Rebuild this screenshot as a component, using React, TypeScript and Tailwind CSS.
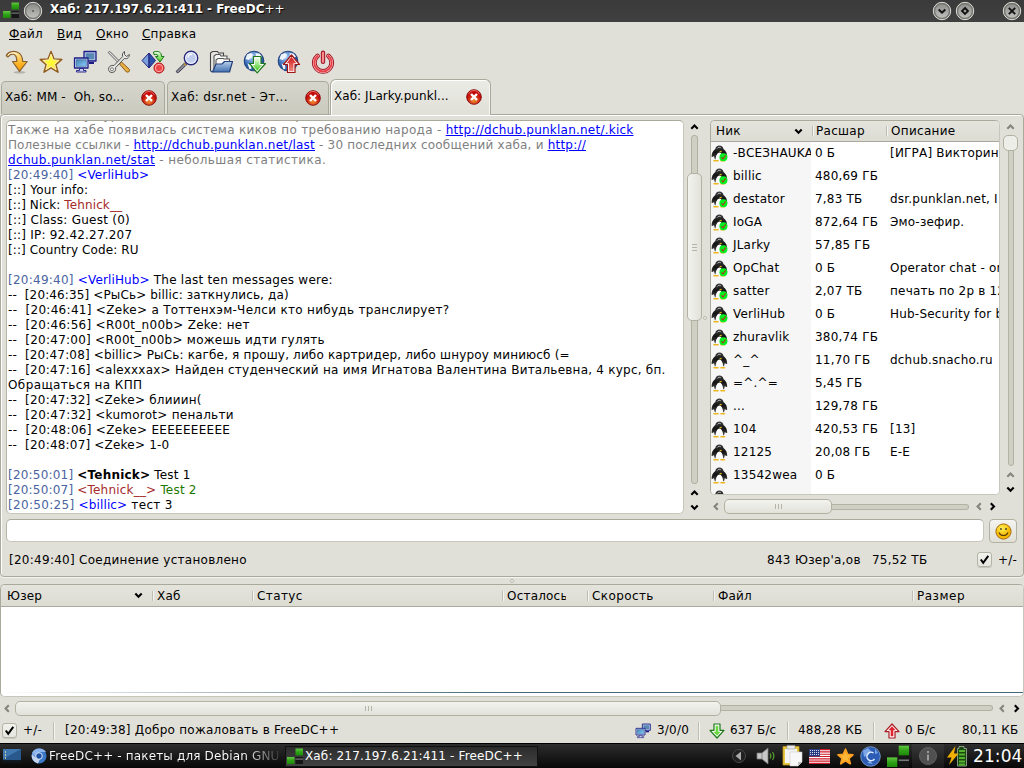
import React from "react";

/* ---------- toolbar and tray icons ---------- */

const Svg = ({ s = 24, children, className = "" }: { s?: number; children: React.ReactNode; className?: string }) => (
  <svg width={s} height={s} viewBox="0 0 24 24" className={"block shrink-0 " + className}>
    {children}
  </svg>
);

const Defs = () => (
  <svg width="0" height="0" className="absolute">
    <defs>
      <linearGradient id="gold" x1="0" y1="0" x2="0" y2="1"><stop offset="0" stopColor="#ffe9a0" /><stop offset=".6" stopColor="#fdb528" /><stop offset="1" stopColor="#f59a00" /></linearGradient>
      <radialGradient id="star"><stop offset="0" stopColor="#ffff30" /><stop offset=".5" stopColor="#fff040" /><stop offset="1" stopColor="#f8c060" /></radialGradient>
      <linearGradient id="screen" x1="0" y1="0" x2="1" y2="1"><stop offset="0" stopColor="#3f7fb0" /><stop offset="1" stopColor="#8fd0ff" /></linearGradient>
      <linearGradient id="green" x1="0" y1="0" x2="0" y2="1"><stop offset="0" stopColor="#f0ffe8" /><stop offset="1" stopColor="#3fc818" /></linearGradient>
      <linearGradient id="red" x1="0" y1="0" x2="0" y2="1"><stop offset="0" stopColor="#d01818" /><stop offset="1" stopColor="#f08880" /></linearGradient>
      <radialGradient id="globe" cx=".4" cy=".3"><stop offset="0" stopColor="#a8d0f8" /><stop offset="1" stopColor="#2a5cac" /></radialGradient>
      <linearGradient id="folder" x1="0" y1="0" x2="0" y2="1"><stop offset="0" stopColor="#b8d0ea" /><stop offset="1" stopColor="#4070b0" /></linearGradient>
      <radialGradient id="close" cx=".5" cy=".75"><stop offset="0" stopColor="#f08a30" /><stop offset="1" stopColor="#c40a0a" /></radialGradient>
      <radialGradient id="smile" cx=".4" cy=".3"><stop offset="0" stopColor="#fff25a" /><stop offset="1" stopColor="#f4b800" /></radialGradient>
      <linearGradient id="led" x1="0" y1="0" x2="0" y2="1"><stop offset="0" stopColor="#60c840" /><stop offset=".5" stopColor="#30a018" /><stop offset="1" stopColor="#1c8a08" /></linearGradient>
      <linearGradient id="btn" x1="0" y1="0" x2="0" y2="1"><stop offset="0" stopColor="#8c8c8a" /><stop offset="1" stopColor="#c0c0bc" /></linearGradient>
      <linearGradient id="tux" x1="0" y1="0" x2="0" y2="1"><stop offset="0" stopColor="#3c3c3c" /><stop offset=".5" stopColor="#141414" /><stop offset="1" stopColor="#4a4a4a" /></linearGradient>
    </defs>
  </svg>
);

const Reconnect = () => (
  <Svg>
    <ellipse cx="14.500" cy="22.300" rx="6" ry="1.200" fill="#0003" />
    <path d="M1.300 5.800C2.500 2 8 .3 12.500 2.300c3.500 1.600 5.200 4.500 5.200 9.200h4.500L14.500 21.300 7.500 11.500h4.200c.2-4-.7-6.500-3.200-7.300C6 3.700 4.200 5 3 7z" fill="url(#gold)" stroke="#8a6030" strokeWidth="1.200" strokeLinejoin="round" />
    <path d="M3 5C6 2.300 10 2.500 12.500 4.500" fill="none" stroke="#fff6dc" strokeWidth="1" />
  </Svg>
);
const Star = ({ s = 24 }: { s?: number }) => (
  <Svg s={s}>
    <path d="M12 1.500l3 7.500 7.800.4-6 5.300 2.200 7.500L12 17.800l-7 4.400 2.200-7.500-6-5.300L9 9z" fill="url(#star)" stroke="#8f5a1c" strokeWidth="1.500" strokeLinejoin="round" />
    <path d="M12 4l2.200 5.900 5.900.4-4.500 4 1.600 5.500L12 16.500l-5.200 3.300 1.600-5.500-4.500-4 5.900-.4z" fill="none" stroke="#fff4c8" strokeWidth=".8" />
  </Svg>
);
const Computers = ({ s = 24 }: { s?: number }) => (
  <Svg s={s}>
    <path d="M11 1.500h12v9.500H11z" fill="#b8c8e8" stroke="#1c1c84" strokeWidth="1.300" strokeLinejoin="round" />
    <path d="M12.700 3.200h8.600v6.100h-8.600z" fill="#5888b4" />
    <path d="M16 13h5" stroke="#1c1c84" strokeWidth="2" />
    <path d="M1.500 8h13.500v10H1.500z" fill="#dce8f8" stroke="#1c1c84" strokeWidth="1.300" strokeLinejoin="round" />
    <path d="M3.200 9.700h10.100v6.600H3.200z" fill="url(#screen)" stroke="#2c5c94" strokeWidth=".6" />
    <path d="M6.500 18.500h4V20.500h2.500V22h-9.500v-1.500H6.500z" fill="#c8d0ec" stroke="#1c1c84" strokeWidth=".9" />
  </Svg>
);
const Tools = () => (
  <Svg>
    <path d="M1.200 2.500l1.500-1.200 10 10-1.500 1.500z" fill="#ddd" stroke="#555" strokeWidth=".9" />
    <path d="M12.500 14l2-2 8 7.500c.5 2-1 3-3 2.500z" fill="#e8b040" stroke="#8a5c18" strokeWidth="1" />
    <path d="M17.500 1.500c-2 1-2.500 3-1.800 5L7 15.500c-3-.7-5.500 1-5.500 3.800 0 2 2 3.700 4.200 3.200 2.300-.4 3.400-2.500 2.800-4.800l8.800-9.200c2.500.8 5.200-.8 5.200-4l-3 2-2-2z" fill="#e6e6e2" stroke="#555" strokeWidth="1" strokeLinejoin="round" />
    <circle cx="5" cy="19.300" r="1.500" fill="#fff" stroke="#666" strokeWidth=".9" />
  </Svg>
);
const Shapes = () => (
  <Svg>
    <path d="M8 3v15L1 10.500z" fill="#7ca0dc" stroke="#20207c" strokeWidth="1" />
    <path d="M8 3l6.500 7.500L8 18z" fill="#2c50a8" stroke="#20207c" strokeWidth="1" />
    <path d="M12.500 2c5-1.500 8 0 8 4.500H23l-4 5.500L14.500 6.500h2.500c0-2-1.500-2.500-4-1.800z" fill="url(#green)" stroke="#1a7a18" strokeWidth="1" strokeLinejoin="round" />
    <circle cx="18" cy="18" r="5" fill="#f04848" stroke="#b01414" strokeWidth="1" />
    <circle cx="18" cy="18" r="3.700" fill="none" stroke="#ffc0c0" strokeWidth=".8" />
  </Svg>
);
const Search = () => (
  <Svg>
    <path d="M1.500 21L10 12.500l2 1.800-8.500 8.200c-1.500.7-2.500-.5-2-1.500z" fill="#8c8c98" stroke="#3a3a4c" strokeWidth="1" />
    <path d="M9 13.500l2 2" stroke="#c89030" strokeWidth="1.300" />
    <circle cx="16" cy="8" r="6.700" fill="#c0ccec" stroke="#282878" strokeWidth="1.400" />
    <circle cx="16" cy="8" r="5.300" fill="none" stroke="#e8ecfc" strokeWidth="1.200" />
    <path d="M13 7.500c0-2 1.500-3.500 4-3" stroke="#fff" strokeWidth="1.300" fill="none" />
  </Svg>
);
const Folders = () => (
  <Svg>
    <path d="M1.500 21V3L3.500 1.500h5l1 1.500h5v4" fill="#e4e4e0" stroke="#444" strokeWidth="1.100" />
    <path d="M5 20V6l2-1.500h4l1 1.500h6v4" fill="#f4f4f0" stroke="#555" strokeWidth="1.100" />
    <path d="M7 19V10l2-1.500h5l1 .5h5.500V12" fill="#fafaf8" stroke="#555" strokeWidth="1.100" />
    <path d="M3.500 22L7 14h6l2.500-2.500h8L20.500 22z" fill="url(#folder)" stroke="#24407c" strokeWidth="1.200" strokeLinejoin="round" />
    <path d="M1.500 21l2 1" stroke="#24407c" strokeWidth="1.200" />
  </Svg>
);
const Globe = () => (
  <>
    <circle cx="11" cy="11" r="9.800" fill="url(#globe)" stroke="#24447c" strokeWidth="1.100" />
    <path d="M4 4.500l4-1.500 2 1.500-1 3-3.500 2.500L2.500 9zM12.500 3l4 .5 2.500 3-3 2-3-1.500zM4.500 13.500L8 15l.5 3.500-2 1z" fill="#eef4fa" />
  </>
);
const GlobeDown = () => (
  <Svg>
    <Globe />
    <path d="M10.500 6.500h7.500v7h4.500L14.200 22.800 6.500 13.500h4z" fill="#fff" stroke="#1c7818" strokeWidth="1.200" strokeLinejoin="round" />
    <path d="M12 8h4.500v7h2.700L14.200 20.800 9.500 15H12z" fill="url(#green)" />
  </Svg>
);
const GlobeUp = () => (
  <Svg>
    <Globe />
    <path d="M10.500 22.500H18v-8h4.500L14.500 5 6.500 14.500h4z" fill="#fff" stroke="#a01414" strokeWidth="1.200" strokeLinejoin="round" />
    <path d="M12 21.200h4.500v-8h3L14.500 7l-5 6.200H12z" fill="url(#red)" />
  </Svg>
);
const Power = () => (
  <Svg>
    <path d="M6.500 6A8.700 8.700 0 1 0 17.500 6" fill="none" stroke="#a01828" strokeWidth="4.800" strokeLinecap="round" />
    <path d="M6.500 6A8.700 8.700 0 1 0 17.500 6" fill="none" stroke="#ffc0c0" strokeWidth="2.800" strokeLinecap="round" />
    <path d="M6.500 6A8.700 8.700 0 1 0 17.500 6" fill="none" stroke="#e84048" strokeWidth="1.800" strokeLinecap="round" />
    <path d="M12 2.800v9" stroke="#a01828" strokeWidth="4.400" strokeLinecap="round" />
    <path d="M12 2.800v9" stroke="#f88c8c" strokeWidth="2.200" strokeLinecap="round" />
  </Svg>
);
const TabClose = () => (
  <svg width="16" height="16" viewBox="0 0 16 16" className="block shrink-0">
    <circle cx="8" cy="8" r="7.300" fill="url(#close)" stroke="#8c1010" strokeWidth="1" />
    <path d="M2.500 5a6 6 0 0 1 11 0" fill="none" stroke="#e86a60" strokeWidth="1" />
    <path d="M5 5l6 6M11 5l-6 6" stroke="#fff" strokeWidth="2.400" />
  </svg>
);
const Leds = ({ className = "size-[16px]" }: { className?: string }) => (
  <svg viewBox="0 0 16 16" className={"block shrink-0 " + className}>
    <path d="M0 9h7.500V16H0z" fill="url(#led)" />
    <path d="M8.500 .5H16v7H8.500z" fill="url(#led)" />
    <path d="M8.500 9H16v7H8.500z" fill="#161616" />
    <path d="M8.500 10.500H16v1.200H8.500z" fill="#777" />
  </svg>
);
const Tux = ({ ok }: { ok: boolean }) => (
  <svg width="17" height="17" viewBox="0 0 17 17" className="block shrink-0">
    <path d="M2.800 7v7.500h11V7z" fill="#e8e8e8" />
    <path d="M8.400 .6c2.300 0 3.700 1.300 4.100 3.500 2.300 1.800 3.900 4.500 3.700 7.900-1 .1-1.700-.3-2.400-1-.3 2-.8 3.200-1.600 3.500C12 11 10.700 8 8.400 8s-3.600 3-3.800 6.500C3.800 14.200 3.300 13 3 11c-.7.700-1.400 1.100-2.400 1C.4 8.600 2 5.900 4.300 4.100 4.700 1.900 6.100.6 8.400.6z" fill="url(#tux)" />
    <path d="M8.400 7.500c2 0 3.200 3 3.400 7H5c.2-4 1.400-7 3.400-7z" fill="#fff" />
    <path d="M6.200 3.600c.8-1.400 2.600-1.700 3.600-.8" stroke="#b0b0b0" strokeWidth="1" fill="none" />
    <path d="M8.200 6.300l2-.6.8 1.200-1.500.6z" fill="#e0b020" />
    <path d="M3 15.700h4M10 15.700h3.500" stroke="#edb71c" strokeWidth="1.500" strokeLinecap="round" />
    {ok && (
      <>
        <circle cx="12.400" cy="12.200" r="4" fill="#00f020" />
        <path d="M10.400 12.300l1.600 1.700 2.600-3.600" stroke="#b83018" strokeWidth="1.100" fill="none" />
      </>
    )}
  </svg>
);
const Down = ({ s = 16 }: { s?: number }) => (
  <Svg s={s}>
    <path d="M7.500 1.500h9V11h6L12 22.500 1.500 11h6z" fill="#fff" stroke="#1c7818" strokeWidth="1.800" strokeLinejoin="round" />
    <path d="M10 4h4V13h3.500L12 19 6.500 13H10z" fill="#68d840" />
  </Svg>
);
const Up = ({ s = 16 }: { s?: number }) => (
  <Svg s={s}>
    <path d="M7.500 22.500h9V13h6L12 1.500 1.500 13h6z" fill="#fff" stroke="#a81c24" strokeWidth="1.800" strokeLinejoin="round" />
    <path d="M10 20h4V11h3.500L12 5 6.500 11H10z" fill="#e02430" />
  </Svg>
);

/* ---------- widgets ---------- */

type Dir = "up" | "down" | "left" | "right";
const PATHS: Record<Dir, string> = {
  up: "M1.300 5.800L4.500 2.600 7.700 5.800",
  down: "M1.300 2.600L4.500 5.800 7.700 2.600",
  left: "M5.800 1.300L2.600 4.500 5.800 7.700",
  right: "M2.800 1.300L6 4.500 2.800 7.700",
};
const Arrow = ({ d, dim, className = "" }: { d: Dir; dim?: boolean; className?: string }) => (
  <svg width="9" height="9" viewBox="0 0 9 9" className={"block shrink-0 " + className}>
    <path d={PATHS[d]} fill="none" stroke={dim ? "#85857f" : "#000"} strokeWidth="2.100" />
  </svg>
);

const Sep = ({ className = "" }: { className?: string }) => (
  <div className={"w-[2px] shrink-0 border-l border-[#bdbdb3] bg-[#f4f4f0] " + className} />
);

const Check = () => (
  <div className="flex size-[15px] shrink-0 items-center justify-center rounded-[3px] border border-[#b4b4a6] bg-linear-to-b from-[#f2f2ee] to-[#e6e6e0] shadow-[0_1px_0_#c8c8be]">
    <svg width="11" height="11" viewBox="0 0 11 11"><path d="M1.800 5.500l2.400 3.400L9.300 1.800" fill="none" stroke="#000" strokeWidth="2" /></svg>
  </div>
);

const HandleH = ({ className = "" }: { className?: string }) => (
  <div className={"flex h-[15px] shrink-0 items-center justify-center gap-[2px] rounded-[5px] border border-[#b2b2a2] bg-linear-to-b from-[#f3f3ef] to-[#e2e2da] " + className}>
    <i className="h-[5px] w-px bg-[#b4b4a8]" /><i className="h-[5px] w-px bg-[#b4b4a8]" /><i className="h-[5px] w-px bg-[#b4b4a8]" />
  </div>
);

const WinButton = ({ children, className = "" }: { children?: React.ReactNode; className?: string }) => (
  <svg width="20" height="20" viewBox="0 0 20 20" className={"block shrink-0 " + className}>
    <circle cx="10" cy="10" r="8.700" fill="#777773" stroke="#deded8" strokeWidth="1" />
    <circle cx="10" cy="10" r="7.300" fill="url(#btn)" stroke="#6a6a66" strokeWidth=".8" />
    {children}
  </svg>
);

const Tab = ({ text, className, active }: { text: string; className: string; active?: boolean }) => (
  <div className={"flex items-center border border-b-0 border-[#a9a99c] " + (active ? "z-10 h-[36px] rounded-t-[6px] bg-linear-to-b from-[#ebebe6] to-[#e0e0d8] pb-[2px] shadow-[inset_1px_1px_0_#fff,inset_-1px_0_0_#f4f4f0] " : "mt-[2px] h-[33px] rounded-t-[5px] bg-linear-to-b from-[#d5d5cb] to-[#cacabf] pb-px ") + className}>
    <span className="flex-1 whitespace-pre">{text}</span>
    <TabClose />
  </div>
);

/* ---------- chat ---------- */

const Time = ({ children }: { children: string }) => <span className="text-[#4a64a0]">{children}</span>;
const Nick = ({ children }: { children: string }) => <span className="tracking-[0.12px] text-[#0000ff]">{children}</span>;
const Link = ({ children, className = "tracking-[0.23px]" }: { children: string; className?: string }) => (
  <span className={"text-[#0000ff] underline underline-offset-1 " + className}>{children}</span>
);

const lines: { c?: string; t: React.ReactNode }[] = [
  { c: "text-[#808080]", t: "            р     у   ур" + " ".repeat(44) + "р" },
  { c: "text-[#808080] tracking-[0.3px]", t: <>Также на хабе появилась система киков по требованию народа - <Link>http://dchub.punklan.net/.kick</Link></> },
  { c: "text-[#808080]", t: <><span className="tracking-[0.1px]">Полезные ссылки - </span><Link>http://dchub.punklan.net/last</Link> - 30 последних сообщений хаба, и <Link>http://</Link></> },
  { c: "text-[#808080] tracking-[0.4px]", t: <><Link className="tracking-[0.34px]">dchub.punklan.net/stat</Link> - небольшая статистика.</> },
  { t: <><Time>[20:49:40]</Time> <Nick>{"<VerliHub>"}</Nick></> },
  { t: "[::] Your info:" },
  { c: "tracking-[0.12px]", t: <>[::] Nick: <span className="text-[#a52a2a]">Tehnick__</span></> },
  { c: "tracking-[0.25px]", t: "[::] Class: Guest (0)" },
  { t: "[::] IP: 92.42.27.207" },
  { c: "tracking-[0.1px]", t: "[::] Country Code: RU" },
  { t: " " },
  { c: "tracking-[0.25px]", t: <><Time>[20:49:40]</Time> <Nick>{"<VerliHub>"}</Nick> The last ten messages were:</> },
  { c: "tracking-[0.13px]", t: "--  [20:46:35] <РыСь> billic: заткнулись, да)" },
  { c: "tracking-[0.3px]", t: "--  [20:46:41] <Zeke> а Тоттенхэм-Челси кто нибудь транслирует?" },
  { c: "tracking-[0.28px]", t: "--  [20:46:56] <R00t_n00b> Zeke: нет" },
  { c: "tracking-[0.25px]", t: "--  [20:47:00] <R00t_n00b> можешь идти гулять" },
  { c: "tracking-[0.16px]", t: "--  [20:47:08] <billic> РыСь: кагбе, я прошу, либо картридер, либо шнуроу миниюсб (=" },
  { c: "tracking-[0.23px]", t: "--  [20:47:16] <alexxxax> Найден студенческий на имя Игнатова Валентина Витальевна, 4 курс, бп." },
  { c: "tracking-[0.4px]", t: "Обращаться на КПП" },
  { t: "--  [20:47:32] <Zeke> блииин(" },
  { c: "tracking-[0.26px]", t: "--  [20:47:32] <kumorot> пенальти" },
  { c: "tracking-[0.3px]", t: "--  [20:48:06] <Zeke> ЕЕЕЕЕЕЕЕЕЕ" },
  { t: "--  [20:48:07] <Zeke> 1-0" },
  { t: " " },
  { t: <><Time>[20:50:01]</Time> <b>{"<Tehnick>"}</b> Test 1</> },
  { t: <><Time>[20:50:07]</Time> <span className="text-[#a52a2a]">{"<Tehnick__>"}</span> <span className="text-[#1d7800]">Test 2</span></> },
  { c: "tracking-[0.32px]", t: <><Time>[20:50:25]</Time> <Nick>{"<billic>"}</Nick> тест 3</> },
];

const users: [string, string, string, boolean][] = [
  ["-ВСЕЗНАUKA", "0 Б", "[ИГРА] Викторина", true],
  ["billic", "480,69 ГБ", "", true],
  ["destator", "7,83 ТБ", "dsr.punklan.net, I", true],
  ["IoGA", "872,64 ГБ", "Эмо-зефир.", true],
  ["JLarky", "57,85 ГБ", "", true],
  ["OpChat", "0 Б", "Operator chat - on", true],
  ["satter", "2,07 ТБ", "печать по 2р в 12", true],
  ["VerliHub", "0 Б", "Hub-Security for b", true],
  ["zhuravlik", "380,74 ГБ", "", true],
  ["^_^", "11,70 ГБ", "dchub.snacho.ru", false],
  ["=^.^=", "5,45 ГБ", "", false],
  ["...", "129,78 ГБ", "", false],
  ["104", "420,53 ГБ", "[13]", false],
  ["12125", "20,08 ГБ", "E-E", false],
  ["13542wea", "0 Б", "", false],
  ["", "", "", false],
];

const tools = [Reconnect, Star, Computers, Tools, Shapes, Search, Folders, GlobeDown, GlobeUp, Power];

const transferCols: [string, string][] = [
  ["Хаб", "w-[100px]"],
  ["Статус", "w-[250px] tracking-[0.4px]"],
  ["Осталось", "w-[85px] pr-[21px]"],
  ["Скорость", "w-[126px] tracking-[0.4px]"],
  ["Файл", "w-[199px]"],
  ["Размер", "w-[110px] tracking-[0.5px]"],
];

export default function App() {
  return (
    <div className="flex h-[768px] w-[1024px] flex-col overflow-hidden bg-[#e0dfd8] font-['DejaVu_Sans',sans-serif] text-[12px] leading-[15px] tracking-[0.2px] text-black">
      <Defs />

      {/* title bar */}
      <header className="flex h-[22px] shrink-0 items-center bg-linear-to-b from-[#3a3a3a] to-[#404040] pr-[2px] pl-[3px]">
        <Leds className="mb-[2px] size-[16px]" />
        <WinButton className="ml-[4px]"><circle cx="10" cy="10" r=".8" fill="#222" /></WinButton>
        <span className="mb-[3px] ml-[7px] flex-1 font-bold tracking-[-0.02px] text-white [text-shadow:1px_1px_1px_#000]">Хаб: 217.197.6.21:411 - FreeDC<span className="font-normal">++</span></span>
        <WinButton><path d="M6.700 8.500l3.300 3.200 3.300-3.200" fill="none" stroke="#111" strokeWidth="2" /></WinButton>
        <WinButton className="ml-[3px]"><path d="M10 7l3 3-3 3-3-3z" fill="none" stroke="#111" strokeWidth="1.800" /></WinButton>
        <WinButton className="ml-[27px]"><path d="M6.800 6.800l6.400 6.400M13.200 6.800l-6.400 6.400" stroke="#111" strokeWidth="1.900" /></WinButton>
      </header>

      {/* menu */}
      <nav className="flex h-[23px] shrink-0 items-center pt-px pl-[9px]">
        <span className="w-[48px]"><u>Ф</u>айл</span>
        <span className="w-[39px]"><u>В</u>ид</span>
        <span className="w-[46px]"><u>О</u>кно</span>
        <span><u>С</u>правка</span>
      </nav>

      {/* toolbar */}
      <div className="flex h-[34px] shrink-0 items-center gap-[10px] pl-[5px]">
        {tools.map((Icon, i) => <Icon key={i} />)}
      </div>

      {/* tabs */}
      <div className="-mb-[2px] flex h-[37px] shrink-0 pl-px">
        <Tab text="Хаб: MM -  Oh, so..." className="w-[164px] pr-[7px] pl-[3px] tracking-[0.12px]" />
        <Tab text="Хаб: dsr.net - Эт..." className="ml-[2px] w-[162px] pr-[7px] pl-[3px] tracking-[0.3px]" />
        <Tab text="Хаб: JLarky.punkl..." className="ml-px w-[161px] pr-[8px] pl-[3px] tracking-[0.05px]" active />
      </div>

      {/* hub page */}
      <main className="flex h-[463px] shrink-0 flex-col rounded-[4px] border border-[#a9a99c] pt-[5px] shadow-[inset_1px_1px_0_#fff,0_1px_0_#f4f4f0]">
        <div className="flex h-[395px] shrink-0 pl-[5px]">
          <section className="h-[394px] w-[678px] overflow-hidden rounded-[5px] border border-[#c6c6ba] border-t-[#a9a99c] border-l-[#b4b4a8] bg-white pl-px whitespace-pre">
            <div className="-mt-[13px]">
              {lines.map((l, i) => <div key={i} className={"h-[15px] " + (l.c ?? "")}>{l.t}</div>)}
            </div>
          </section>

          <div className="ml-[3px] flex w-[15px] flex-col items-center pt-[3px]">
            <Arrow d="up" />
            <div className="mt-[3px] flex h-[349px] w-[7px] flex-col items-center rounded-[3px] border border-[#b2b2a2] bg-[#cfcfc4]">
              <div className="mt-[37px] flex h-[148px] w-[15px] shrink-0 flex-col items-center justify-center gap-[2px] rounded-[5px] border border-[#b2b2a2] bg-linear-to-r from-[#f3f3ef] to-[#e2e2da]">
                <i className="h-px w-[5px] bg-[#b4b4a8]" /><i className="h-px w-[5px] bg-[#b4b4a8]" /><i className="h-px w-[5px] bg-[#b4b4a8]" />
              </div>
            </div>
            <Arrow d="up" className="mt-[5px]" />
            <Arrow d="down" className="mt-[5px]" />
          </div>

          <div className="flex w-[8px] items-center pl-px"><i className="size-[4px] rounded-full border border-[#b8b8ac] bg-[#f4f4f0]" /></div>

          <div className="flex w-[290px] flex-col">
            <section className="flex h-[375px] shrink-0 flex-col overflow-hidden rounded-[5px] border border-[#c6c6ba] border-t-[#a9a99c] border-l-[#a9a99c] bg-white">
              <div className="flex h-[21px] shrink-0 items-center border-b border-[#a9a99c] bg-linear-to-b from-[#e4e4dd] to-[#dcdcd3] whitespace-nowrap">
                <span className="w-[83px] pl-[5px]">Ник</span><Arrow d="down" className="mr-[9px]" />
                <Sep className="h-[10px]" />
                <span className="ml-[2px] w-[49px] overflow-hidden tracking-[0.3px]">Расшарено</span>
                <Sep className="ml-[21px] h-[10px]" /><span className="ml-[3px] tracking-[0.3px]">Описание</span>
              </div>
              <div className="flex flex-1 flex-col overflow-hidden bg-linear-to-r from-[#f6f6f6] from-[100px] to-white to-[100px] whitespace-pre">
                {users.map(([n, s, d, ok], i) => (
                  <div key={i} className="flex h-[23px] shrink-0 items-center">
                    <Tux ok={ok} />
                    <span className="w-[83px] shrink-0 overflow-hidden pl-[5px]">{n}</span>
                    <span className="w-[79px] shrink-0 pl-[4px]">{s}</span>
                    <span className="min-w-0 flex-1 overflow-hidden">{d}</span>
                  </div>
                ))}
              </div>
            </section>
            <div className="flex h-[20px] shrink-0 items-center pt-[3px] pl-[2px]">
              <Arrow d="left" dim />
              <HandleH className="ml-[3px] w-[108px]" />
              <div className="h-[6px] w-[137px] rounded-r-[3px] border border-l-0 border-[#b2b2a2] bg-[#cfcfc4]" />
              <Arrow d="left" dim className="ml-[6px]" />
              <Arrow d="right" className="ml-[4px]" />
            </div>
          </div>

          <div className="ml-[3px] flex w-[15px] flex-col items-center pt-[3px]">
            <Arrow d="up" dim />
            <div className="mt-[3px] flex h-[331px] w-[6px] flex-col items-center rounded-[3px] border border-[#b2b2a2] bg-[#cfcfc4]">
              <div className="-mt-px h-[16px] w-[15px] shrink-0 rounded-[5px] border border-[#b2b2a2] bg-[#eeeee9]" />
            </div>
            <Arrow d="up" dim className="mt-[5px]" />
            <Arrow d="down" className="mt-[5px]" />
          </div>
        </div>

        <div className="mt-[4px] flex h-[24px] shrink-0 items-start pl-[5px]">
          <div className="h-[23px] w-[978px] rounded-[5px] border border-[#c6c6ba] border-t-[#a9a99c] border-l-[#b4b4a8] bg-white" />
          <div className="ml-[5px] flex h-[24px] w-[28px] items-center justify-center rounded-[4px] border border-[#b2b2a2] bg-linear-to-b from-[#f4f4f0] to-[#e0e0d8]">
            <svg width="17" height="17" viewBox="0 0 17 17">
              <circle cx="8.500" cy="8.500" r="7.600" fill="url(#smile)" stroke="#a86a10" strokeWidth="1" />
              <path d="M6 5v2M11 5v2" stroke="#333" strokeWidth="1.300" />
              <path d="M4 9.500c1.500 4 7.500 4 9 0" fill="none" stroke="#5a3c08" strokeWidth="1.100" />
            </svg>
          </div>
        </div>

        <div className="flex h-[32px] shrink-0 items-center pl-[8px]">
          <span className="mt-[2px] w-[758px] tracking-[0.27px]">[20:49:40] Соединение установлено</span>
          <span className="mt-[2px] w-[105px] tracking-[0.3px]">843 Юзер'а,ов</span>
          <span className="mt-[2px] w-[105px]">75,52 ТБ</span>
          <Check />
          <span className="mt-[2px] ml-[6px]">+/-</span>
        </div>
      </main>

      {/* splitter */}
      <div className="flex h-[7px] shrink-0 items-center justify-center"><i className="mt-px size-[4px] rounded-full border border-[#b8b8ac] bg-[#f4f4f0]" /></div>

      {/* transfers */}
      <section className="flex h-[113px] shrink-0 flex-col overflow-hidden rounded-[5px] border border-[#c6c6ba] border-t-[#a9a99c] border-l-[#a9a99c] bg-white">
        <div className="flex h-[22px] shrink-0 items-center border-b border-[#a9a99c] bg-linear-to-b from-[#e4e4dd] to-[#dcdcd3]">
          <span className="w-[133px] pt-px pl-[6px]">Юзер</span><Arrow d="down" className="mr-[9px]" />
          {transferCols.map(([t, w]) => (
            <div key={t} className={"flex items-center " + w}>
              <Sep className="h-[10px]" /><span className="ml-[3px] overflow-hidden pt-px">{t}</span>
            </div>
          ))}
        </div>
        <div className="mt-[85px] h-px shrink-0 bg-linear-to-r from-white to-[#456579] to-50%" />
      </section>
      <div className="flex h-[21px] shrink-0 items-center pt-[1px] pl-[3px]">
        <Arrow d="left" dim />
        <HandleH className="ml-[3px] w-[706px]" />
        <div className="h-[6px] w-[272px] rounded-r-[3px] border border-l-0 border-[#b2b2a2] bg-[#cfcfc4]" />
        <Arrow d="left" dim className="ml-[5px]" />
        <Arrow d="right" className="ml-[5px]" />
      </div>

      {/* status bar */}
      <footer className="flex h-[25px] shrink-0 items-center pl-[2px]">
        <Check />
        <span className="ml-[6px] w-[30px]">+/-</span>
        <Sep className="h-[18px]" />
        <span className="ml-[10px] w-[570px] tracking-[0.25px]">[20:49:38] Добро пожаловать в FreeDC++</span>
        <Computers s={16} />
        <span className="ml-[6px] w-[41px]">3/0/0</span>
        <Sep className="h-[18px]" />
        <span className="ml-[9px]"><Down /></span>
        <span className="ml-[5px] w-[57px] tracking-[0.1px]">637 Б/с</span>
        <Sep className="h-[18px]" />
        <span className="ml-[9px] w-[75px]">488,28 КБ</span>
        <Sep className="h-[18px]" />
        <span className="ml-[9px]"><Up /></span>
        <span className="ml-[5px] w-[47px] tracking-[0.1px]">0 Б/с</span>
        <span className="ml-[10px]">80,11 КБ</span>
      </footer>

      {/* desktop panel */}
      <div className="flex h-[25px] shrink-0 items-center border-t border-black bg-linear-to-b from-[#2e2e2e] to-[#080808] text-white">
        <svg width="18" height="16" viewBox="0 0 18 16" className="ml-[3px] shrink-0">
          <path d="M0 1h18v13H0z" fill="#28588c" /><path d="M0 1h18L0 11z" fill="#3f78b0" />
          <path d="M2 4h1M2 7h1M2 10h1" stroke="#e8e0a0" strokeWidth="1.500" /><path d="M0 12h18v2.500H0z" fill="#101820" />
        </svg>
        <svg width="16" height="16" viewBox="0 0 16 16" className="ml-[10px] shrink-0">
          <circle cx="8" cy="8" r="7.500" fill="#3c78c8" /><path d="M8 .5A7.500 7.500 0 0 0 1 5l5 5 2-6h7A7.500 7.500 0 0 0 8 .5z" fill="#8cb4ec" />
          <path d="M1 6a7.500 7.500 0 0 0 6 9.400L9 11 4 9z" fill="#c4d4ec" /><circle cx="8" cy="8" r="3.300" fill="#1c50a0" stroke="#dce8f8" strokeWidth="1" />
        </svg>
        <span className="ml-[2px] w-[231px] overflow-hidden bg-linear-to-r from-white from-85% to-[#333] bg-clip-text pt-px tracking-[0.15px] whitespace-nowrap text-transparent">FreeDC++ - пакеты для Debian GNU</span>
        <div className="ml-[5px] flex h-[21px] w-[253px] items-center border border-[#111] bg-linear-to-b from-[#2c2c2c] to-[#424242] pl-px">
          <Leds />
          <span className="ml-[2px] pt-px tracking-[0.15px]">Хаб: 217.197.6.21:411 - FreeDC++</span>
        </div>
        <svg width="14" height="16" viewBox="0 0 14 16" className="ml-[194px] shrink-0">
          <circle cx="7" cy="8" r="6.500" fill="#202020" stroke="#484848" /><path d="M9 3.500v9L3.500 8z" fill="#a8a8a8" />
        </svg>
        <svg width="20" height="20" viewBox="0 0 20 20" className="ml-[10px] shrink-0">
          <path d="M1 7h5l6-5v16l-6-5H1z" fill="#c8c8c8" stroke="#777" strokeWidth=".8" /><path d="M6 7v6" stroke="#888" /><path d="M14 7.500c1.200 1.600 1.200 3.400 0 5M16.500 6c1.800 2.600 1.800 5.400 0 8" stroke="#58a030" strokeWidth="1.200" fill="none" />
        </svg>
        <svg width="22" height="22" viewBox="0 0 22 22" className="ml-[6px] shrink-0">
          <path d="M1 1.500h16V20H1z" fill="#e8c840" stroke="#c09820" strokeWidth=".8" /><path d="M3 4h12v14H3z" fill="#f4f4f4" /><path d="M5 .5h8V4H5z" fill="#e8e8e8" stroke="#999" strokeWidth=".6" /><path d="M8 7h12v10l-4 4H8z" fill="#f8f8f8" stroke="#ccc" strokeWidth=".6" /><path d="M16 21v-4h4z" fill="#c0c0c0" />
        </svg>
        <svg width="21" height="15" viewBox="0 0 21 15" className="ml-[5px] shrink-0">
          <path d="M0 0h21v15H0z" fill="#fff" />
          <path d="M0 .6h21M0 2.900h21M0 5.200h21M0 7.500h21M0 9.800h21M0 12.100h21M0 14.400h21" stroke="#d01828" strokeWidth="1.150" />
          <path d="M0 0h11v7.500H0z" fill="#283c84" /><path d="M1 1.500h9M1 3.500h9M1 5.500h9" stroke="#fff" strokeWidth=".8" strokeDasharray="1 1" />
        </svg>
        <Svg s={17} className="ml-[7px]"><path d="M12 1.800l3 7.200 7.500.6-5.700 5.100 1.900 7.500L12 18l-6.700 4.200 1.900-7.500L1.500 9.600 9 9z" fill="#ffb838" stroke="#ffa020" strokeWidth="2.500" strokeLinejoin="round" /></Svg>
        <svg width="21" height="21" viewBox="0 0 21 21" className="ml-[6px] shrink-0">
          <circle cx="10.500" cy="10.500" r="9.800" fill="#2c5cb4" stroke="#88a8d8" strokeWidth=".8" />
          <path d="M3 5l5-3 3 3-3 4-4 2zM15 3l3 4-3 1zM7 17l3-2 3 3z" fill="#7ca8e8" />
          <path d="M13.500 7a4.200 4.200 0 1 0 1 6" fill="none" stroke="#e0ecff" strokeWidth="1.500" />
        </svg>
        <Leds className="ml-[6px] size-[22px]" />
        <div className="ml-[3px] flex h-full w-[32px] shrink-0 items-center justify-center bg-linear-to-b from-[#383838] to-[#181818]">
          <svg width="18" height="18" viewBox="0 0 18 18"><circle cx="9" cy="9" r="8.500" fill="#505050" stroke="#606060" /><path d="M9 7.500v6M9 4v2" stroke="#999" strokeWidth="2" /></svg>
        </div>
        <svg width="21" height="22" viewBox="0 0 21 22" className="ml-[2px] shrink-0">
          <path d="M13 1.500h5v2h2.500v17.500h-9V3.500H13z" fill="#184810" stroke="#a0b898" strokeWidth=".8" /><path d="M13 6h6M13 9.500h6M13 13h6M13 16.500h6M13 19.500h6" stroke="#58b030" strokeWidth="2" />
          <path d="M9.500 1L1 12.500h4.500L3 20l9.500-11.500H8z" fill="#f4b000" />
        </svg>
        <span className="ml-[6px] text-[17px] leading-[20px] tracking-[0.1px] whitespace-nowrap">21:04</span>
      </div>
    </div>
  );
}
